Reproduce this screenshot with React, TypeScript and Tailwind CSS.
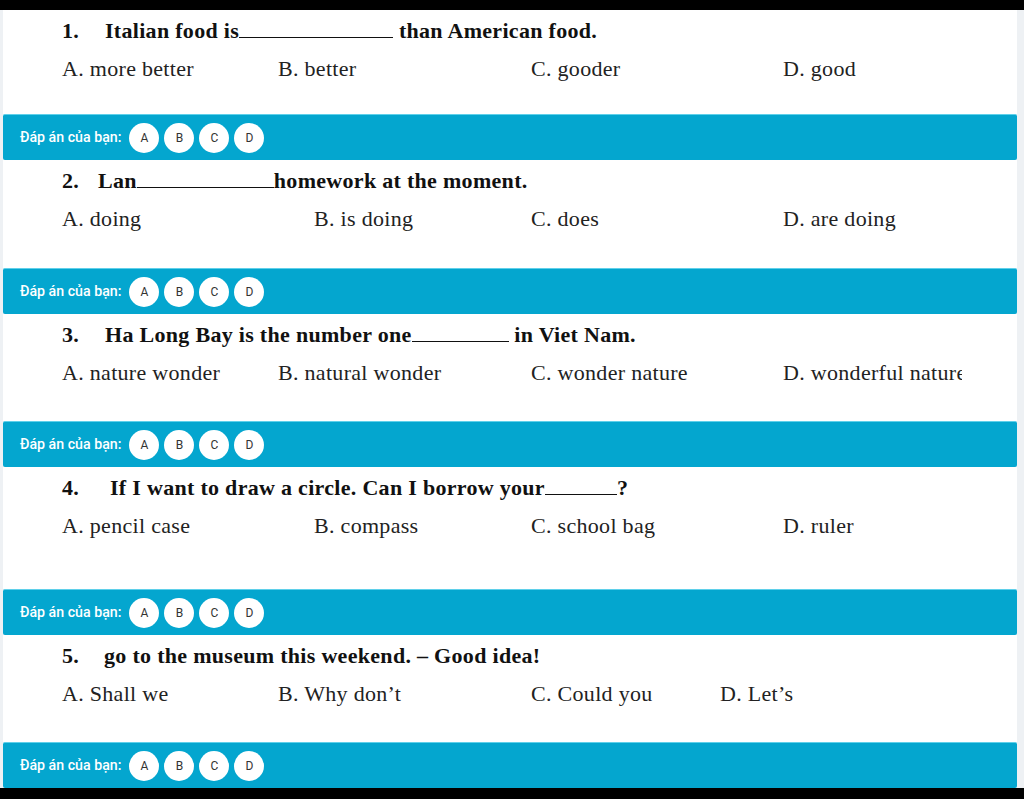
import React from 'react'

type Question = {
  num: string
  indent: string
  parts: (string | { blank: number })[]
  height: string
  options: { text: string; x: string }[]
}

const questions: Question[] = [
  {
    num: '1.',
    indent: 'w-[43px]',
    parts: ['Italian food is', { blank: 154 }, ' than American food.'],
    height: 'h-[104px]',
    options: [
      { text: 'A. more better', x: 'w-[216px]' },
      { text: 'B. better', x: 'w-[253px]' },
      { text: 'C. gooder', x: 'w-[252px]' },
      { text: 'D. good', x: '' },
    ],
  },
  {
    num: '2.',
    indent: 'w-[36px]',
    parts: ['Lan', { blank: 137 }, 'homework at the moment.'],
    height: 'h-[108px]',
    options: [
      { text: 'A. doing', x: 'w-[252px]' },
      { text: 'B. is doing', x: 'w-[217px]' },
      { text: 'C. does', x: 'w-[252px]' },
      { text: 'D. are doing', x: '' },
    ],
  },
  {
    num: '3.',
    indent: 'w-[43px]',
    parts: ['Ha Long Bay is the number one', { blank: 97 }, ' in Viet Nam.'],
    height: 'h-[107px]',
    options: [
      { text: 'A. nature wonder', x: 'w-[216px]' },
      { text: 'B. natural wonder', x: 'w-[253px]' },
      { text: 'C. wonder nature', x: 'w-[252px]' },
      { text: 'D. wonderful nature', x: 'w-[179px] overflow-hidden' },
    ],
  },
  {
    num: '4.',
    indent: 'w-[48px]',
    parts: ['If I want to draw a circle. Can I borrow your', { blank: 72 }, '?'],
    height: 'h-[122px]',
    options: [
      { text: 'A. pencil case', x: 'w-[252px]' },
      { text: 'B. compass', x: 'w-[217px]' },
      { text: 'C. school bag', x: 'w-[252px]' },
      { text: 'D. ruler', x: '' },
    ],
  },
  {
    num: '5.',
    indent: 'w-[42px]',
    parts: ['go to the museum this weekend. – Good idea!'],
    height: 'h-[107px]',
    options: [
      { text: 'A. Shall we', x: 'w-[216px]' },
      { text: 'B. Why don’t', x: 'w-[253px]' },
      { text: 'C. Could you', x: 'w-[189px]' },
      { text: 'D. Let’s', x: '' },
    ],
  },
]

const AnswerBar = () => (
  <div className="h-[46px] bg-[#04a6cf] rounded-[2px] border-t border-[#5fd0ea] flex items-center pl-[17px] gap-[8px]">
    <span className="text-white text-[14.2px] font-medium font-['Roboto',sans-serif]">
      Đáp án của bạn:
    </span>
    <div className="flex gap-[5px]">
      {['A', 'B', 'C', 'D'].map((l) => (
        <div
          key={l}
          className="w-[30px] h-[30px] rounded-full bg-white flex items-center justify-center text-[12px] text-[#333] font-['Roboto',sans-serif]"
        >
          {l}
        </div>
      ))}
    </div>
  </div>
)

export default function App() {
  return (
    <div className="w-[1024px] h-[799px] bg-black overflow-hidden pt-[10px]">
      <div className="bg-[#eef1f4] pl-[3px] pr-[7px]">
        {questions.map((q) => (
          <div key={q.num}>
            <div className={`${q.height} bg-white pl-[59px] pt-[7px] font-['Liberation_Serif',serif] text-[#111]`}>
              <div className="flex items-baseline text-[22px] font-bold leading-[28px] tracking-[0.3px]">
                <span className={`${q.indent} shrink-0`}>{q.num}</span>
                <span className="whitespace-pre">
                  {q.parts.map((p, i) =>
                    typeof p === 'string' ? (
                      <span key={i}>{p}</span>
                    ) : (
                      <span
                        key={i}
                        className="inline-block border-b-[1.5px] border-[#111] align-baseline"
                        style={{ width: p.blank, height: 4 }}
                      />
                    )
                  )}
                </span>
              </div>
              <div className="flex mt-[10px] text-[22px] leading-[28px] tracking-[0.3px] text-[#222]">
                {q.options.map((o) => (
                  <span key={o.text} className={`${o.x} shrink-0 whitespace-nowrap`}>
                    {o.text}
                  </span>
                ))}
              </div>
            </div>
            <AnswerBar />
          </div>
        ))}
      </div>
    </div>
  )
}
